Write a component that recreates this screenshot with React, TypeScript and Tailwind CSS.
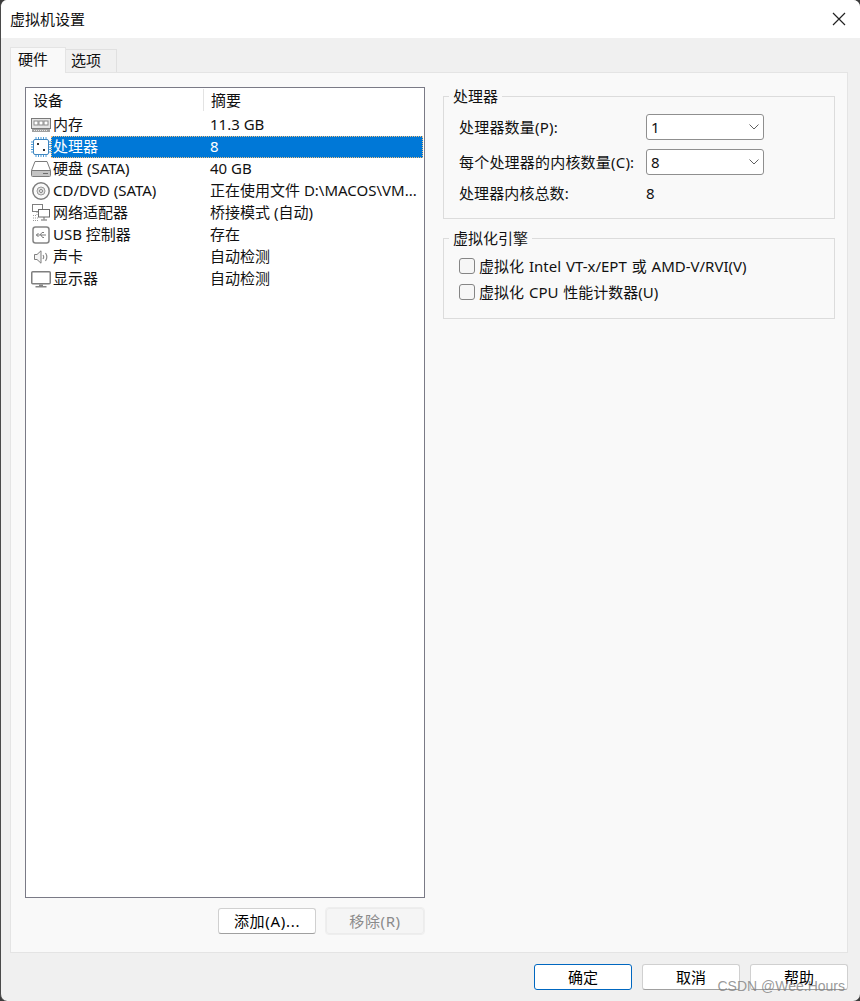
import React from "react";

const FONT = "[font-family:'Noto_Sans','Noto_Sans_CJK_SC',sans-serif]";

function MemoryIcon() {
  return (
    <svg width="20" height="15" viewBox="0 0 20 15" fill="none">
      <rect x="0.5" y="0.5" width="19" height="10" fill="#e4e4e4" stroke="#7a7a7a" />
      <rect x="3" y="3" width="4" height="4" fill="#fff" stroke="#8a8a8a" />
      <rect x="8" y="3" width="4" height="4" fill="#fff" stroke="#8a8a8a" />
      <rect x="13" y="3" width="4" height="4" fill="#fff" stroke="#8a8a8a" />
      <path d="M1 11h18v3H1z" fill="#a0a0a0" />
      <path d="M3 12.5h14" stroke="#e8e8e8" strokeDasharray="1 1" />
    </svg>
  );
}

function CpuIcon() {
  return (
    <svg width="20" height="20" viewBox="0 0 20 20" fill="none">
      <path d="M5 0v3M7.500 0v3M10 0v3M12.500 0v3M15 0v3M5 17v3M7.500 17v3M10 17v3M12.500 17v3M15 17v3M0 5h3M0 7.500h3M0 10h3M0 12.500h3M0 15h3M17 5h3M17 7.500h3M17 10h3M17 12.500h3M17 15h3" stroke="#4a9ad8" />
      <rect x="2.500" y="2.500" width="15" height="15" rx="1.500" fill="#fff" stroke="#3f86c0" />
      <rect x="6" y="6" width="2" height="2" fill="#333" />
      <rect x="12" y="12" width="2" height="2" fill="#333" />
    </svg>
  );
}

function DiskIcon() {
  return (
    <svg width="20" height="16" viewBox="0 0 20 16" fill="none">
      <path d="M4 .5h12l3.500 9v5a1 1 0 0 1-1 1h-17a1 1 0 0 1-1-1v-5z" fill="#fff" stroke="#7a7a7a" />
      <path d="M1 9.500h18v5.500H1z" fill="#c4c4c4" />
      <path d="M.5 9.500h19" stroke="#7a7a7a" />
      <path d="M12 12.500h5" stroke="#6a6a6a" />
    </svg>
  );
}

function CdIcon() {
  return (
    <svg width="18" height="18" viewBox="0 0 18 18" fill="none">
      <circle cx="9" cy="9" r="8.200" fill="#fafafa" stroke="#7f7f7f" strokeWidth="1.500" />
      <circle cx="9" cy="9" r="4" fill="#e0e0e0" stroke="#9a9a9a" />
      <circle cx="9" cy="9" r="1.500" fill="#fff" stroke="#7f7f7f" />
    </svg>
  );
}

function NetworkIcon() {
  return (
    <svg width="18" height="18" viewBox="0 0 18 18" fill="none">
      <rect x="0.500" y="0.500" width="10" height="7" fill="#fff" stroke="#7f7f7f" />
      <rect x="6.500" y="5.500" width="11" height="7.500" fill="#fff" stroke="#6a6a6a" />
      <path d="M12 13v2.500M9 16h6" stroke="#6a6a6a" />
      <path d="M5 8v3M1 11.500h4M1 14h5M1 16.500h5" stroke="#9a9a9a" strokeDasharray="1 1" />
    </svg>
  );
}

function UsbIcon() {
  return (
    <svg width="18" height="18" viewBox="0 0 18 18" fill="none">
      <rect x="1" y="1" width="16" height="16" rx="2.500" fill="#fff" stroke="#858585" strokeWidth="1.500" />
      <path d="M4 9h10M6.500 7 4.500 9l2 2M8 9l2-2.500h2M9 9l1.500 2.500H12" stroke="#7a7a7a" />
    </svg>
  );
}

function SpeakerIcon() {
  return (
    <svg width="14" height="14" viewBox="0 0 14 14" fill="none">
      <path d="M.5 4.500h2.500L7 .8v12.400L3 9.500H.5z" fill="#f4f4f4" stroke="#7f7f7f" />
      <path d="M9 5c.8 1.200.8 2.800 0 4M11.500 3c1.600 2.400 1.600 5.600 0 8" stroke="#8a8a8a" strokeWidth="1.200" />
    </svg>
  );
}

function MonitorIcon() {
  return (
    <svg width="20" height="17" viewBox="0 0 20 17" fill="none">
      <rect x="0.750" y="0.750" width="18.500" height="12" rx="1" fill="#fff" stroke="#7f7f7f" strokeWidth="1.500" />
      <path d="M8 13.500h4V15H8z" fill="#858585" />
      <path d="M4.500 15.750h11" stroke="#858585" strokeWidth="1.500" />
    </svg>
  );
}

const devices = [
  { name: "内存", summary: "11.3 GB", icon: <MemoryIcon /> },
  { name: "处理器", summary: "8", icon: <CpuIcon />, selected: true },
  { name: "硬盘 (SATA)", summary: "40 GB", icon: <DiskIcon /> },
  { name: "CD/DVD (SATA)", summary: "正在使用文件 D:\\MACOS\\VM...", icon: <CdIcon /> },
  { name: "网络适配器", summary: "桥接模式 (自动)", icon: <NetworkIcon /> },
  { name: "USB 控制器", summary: "存在", icon: <UsbIcon /> },
  { name: "声卡", summary: "自动检测", icon: <SpeakerIcon /> },
  { name: "显示器", summary: "自动检测", icon: <MonitorIcon /> },
];

function DeviceRow({ name, summary, icon, selected }: { name: string; summary: string; icon: React.ReactNode; selected?: boolean }) {
  return (
    <div className="flex h-[22px] items-center pl-[5px] pr-px">
      <span className="flex w-[20px] shrink-0 items-center justify-center">{icon}</span>
      <div className={`flex h-full flex-1 items-center pb-[2px] ${selected ? "bg-[#0078d7] text-white outline-1 -outline-offset-1 outline-dotted outline-[#f0c080]" : ""}`}>
        <span className="w-[159px] shrink-0 whitespace-nowrap pl-[2px]">{name}</span>
        <span className="whitespace-nowrap">{summary}</span>
      </div>
    </div>
  );
}

function GroupBox({ title, className, children }: { title: string; className: string; children: React.ReactNode }) {
  return (
    <fieldset className={`border border-[#dcdcdc] ${className}`}>
      <legend className="ml-[5px] px-[4px] leading-[20px]">{title}</legend>
      <div className="px-[15px]">{children}</div>
    </fieldset>
  );
}

function Combo({ value }: { value: string }) {
  return (
    <div className="flex h-[26px] w-[118px] items-center justify-between rounded-[3px] border border-[#8f8f8f] bg-white pl-[4px] pr-[4px]">
      <span>{value}</span>
      <svg width="10" height="6" viewBox="0 0 10 6" fill="none">
        <path d="M.5 .5 5 5 9.500 .5" stroke="#606060" />
      </svg>
    </div>
  );
}

function Check({ label }: { label: string }) {
  return (
    <div className="flex h-[26px] items-center gap-[4px]">
      <span className="h-[16px] w-[16px] rounded-[3px] border border-[#858585] bg-[#f6f6f6]" />
      <span className="whitespace-nowrap [word-spacing:1px]">{label}</span>
    </div>
  );
}

function DialogButton({ label, primary, disabled, className = "" }: { label: string; primary?: boolean; disabled?: boolean; className?: string }) {
  const look = primary
    ? "border-[#0067c0] bg-white text-black"
    : disabled
      ? "border-[#ececec] bg-[#f5f5f5] text-[#8a8a8a] outline outline-[#eeeeee]"
      : "border-[#d0d0d0] border-b-[#a0a0a0] bg-white text-black";
  return (
    <button className={`flex h-[26px] w-[98px] items-center justify-center rounded-[3px] border ${look} ${className}`}>{label}</button>
  );
}

export default function App() {
  return (
    <div className="h-[1001px] w-[860px] overflow-hidden bg-[#3c3c3c]">
      <div className={`relative flex h-[1001px] w-[860px] flex-col overflow-hidden rounded-[7px] border-l border-[#4a4a4a] bg-[#f0f0f0] text-[15px] leading-[22px] text-[#111] ${FONT}`}>
        <div className="flex h-[38px] shrink-0 items-center justify-between bg-white pl-[9px] pr-[14px]">
          <span>虚拟机设置</span>
          <svg width="14" height="14" viewBox="0 0 14 14" fill="none">
            <path d="M1 1 13 13M13 1 1 13" stroke="#222" strokeWidth="1.200" />
          </svg>
        </div>

        <div className="flex flex-1 flex-col pl-[9px] pr-[12px]">
          <div className="flex h-[34px] shrink-0 items-end">
            <div className="z-10 -mb-px flex h-[26px] w-[56px] items-center border border-b-0 border-[#e4e4e4] bg-[#f9f9f9] pb-[4px] pl-[7px]">硬件</div>
            <div className="-mb-px flex h-[24px] w-[51px] items-center border border-l-0 border-[#e0e0e0] bg-[#f0f0f0] pb-[2px] pl-[5px]">选项</div>
          </div>

          <div className="flex h-[881px] shrink-0 gap-[18px] border border-[#e4e4e4] bg-[#f9f9f9] pl-[14px] pt-[14px]">
            <div className="flex w-[400px] shrink-0 flex-col">
              <div className="h-[811px] border border-[#7a7a86] bg-white">
                <div className="flex h-[26px] items-center pb-[2px]">
                  <span className="w-[178px] border-r border-[#e3e3e3] pl-[7px]">设备</span>
                  <span className="pl-[7px]">摘要</span>
                </div>
                {devices.map((d) => (
                  <DeviceRow key={d.name} {...d} />
                ))}
              </div>
              <div className="mt-[10px] flex justify-end gap-[10px] pr-px">
                <DialogButton label="添加(A)..." className="tracking-[0.7px]" />
                <DialogButton label="移除(R)" disabled className="tracking-[0.6px]" />
              </div>
            </div>

            <div className="-mt-px flex w-[392px] shrink-0 flex-col gap-[9px]">
              <GroupBox title="处理器" className="h-[133px]">
                <div className="mt-[8px] flex h-[26px] items-center">
                  <span className="w-[187px] tracking-[0.2px]">处理器数量(P):</span>
                  <Combo value="1" />
                </div>
                <div className="mt-[9px] flex h-[26px] items-center">
                  <span className="w-[187px] whitespace-nowrap tracking-[0.2px]">每个处理器的内核数量(C):</span>
                  <Combo value="8" />
                </div>
                <div className="mt-[5px] flex h-[26px] items-center">
                  <span className="w-[187px] tracking-[0.1px]">处理器内核总数:</span>
                  <span>8</span>
                </div>
              </GroupBox>
              <GroupBox title="虚拟化引擎" className="h-[91px]">
                <div className="mt-[5px]">
                  <Check label="虚拟化 Intel VT-x/EPT 或 AMD-V/RVI(V)" />
                  <Check label="虚拟化 CPU 性能计数器(U)" />
                </div>
              </GroupBox>
            </div>
          </div>

          <div className="flex flex-1 items-center justify-end gap-[10px]">
            <DialogButton label="确定" primary />
            <DialogButton label="取消" />
            <DialogButton label="帮助" />
          </div>
        </div>

        <span className="absolute bottom-[6px] right-[15px] text-[14px] leading-[18px] text-[#808080]/80 [font-family:'Liberation_Sans',sans-serif]">CSDN @Wee.Hours</span>
      </div>
    </div>
  );
}
